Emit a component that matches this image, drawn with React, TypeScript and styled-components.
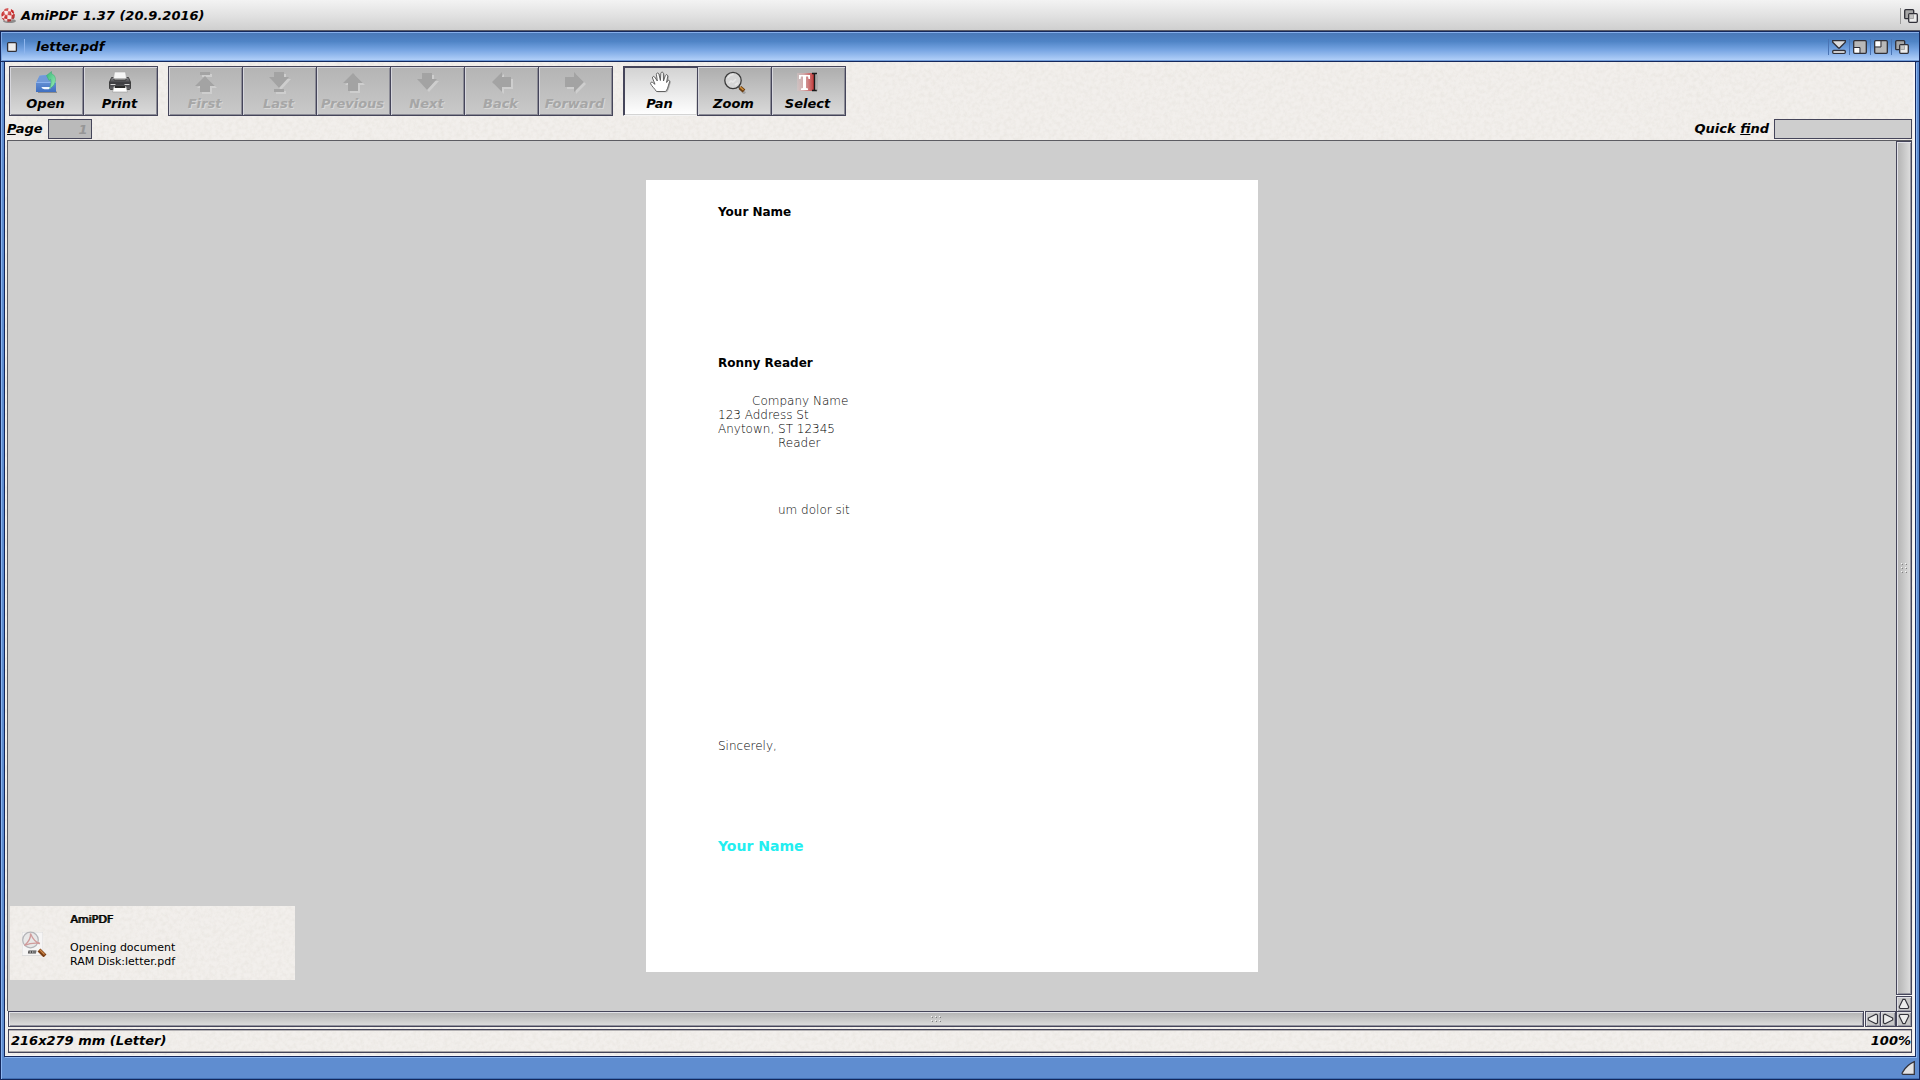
import React from "react";
import styled, { createGlobalStyle, css } from "styled-components";

const navy = "#14285c";
const edge = "#45455a";
const shine = "#8db6f0";
const marble = `#f2efec url("data:image/svg+xml,%3Csvg xmlns='http://www.w3.org/2000/svg' width='256' height='256'%3E%3Cfilter id='n'%3E%3CfeTurbulence type='fractalNoise' baseFrequency='0.25' numOctaves='3' stitchTiles='stitch'/%3E%3CfeColorMatrix values='0 0 0 0 0.6 0 0 0 0 0.57 0 0 0 0 0.5 0.35 0 0 0 -0.12'/%3E%3C/filter%3E%3Crect width='256' height='256' filter='url(%23n)'/%3E%3C/svg%3E")`;

const GlobalStyle = createGlobalStyle`
  * { box-sizing: border-box; }
  body { margin: 0; background: #cecece; }
  body, button, input {
    font-family: "DejaVu Sans", "Noto Sans", sans-serif;
    font-size: 13px;
    line-height: 16px;
    color: #000;
  }
  button { margin: 0; padding: 0; border: 0; background: none; }
  svg { display: block; flex: none; }
`;

const boldItalic = css`
  font-weight: bold;
  font-style: italic;
`;

const Screen = styled.div`
  display: flex;
  flex-direction: column;
  height: 100vh;
`;

const ScreenBar = styled.header`
  ${boldItalic}
  display: flex;
  align-items: center;
  gap: 4px;
  height: 31px;
  flex: none;
  padding: 1px 0 0 1px;
  background: linear-gradient(#f3f3f3, #e2e2e2 50%, #cfcfcf);
  border-bottom: 1px solid #5a5a66;
`;

const BarTitle = styled.h1`
  flex: 1;
  margin: 0;
  font-size: 13px;
`;

const Window = styled.main`
  display: flex;
  flex-direction: column;
  flex: 1;
  min-height: 0;
  border: 1px solid ${navy};
`;

const WindowBar = styled.div`
  ${boldItalic}
  display: flex;
  align-items: center;
  height: 30px;
  flex: none;
  padding: 0 7px 0 5px;
  background: linear-gradient(#4a78b8, #4f84c6 30%, #76a4e2 60%, #b6d3fb);
  border-top: 1px solid #86aeea;
  border-bottom: 1px solid ${navy};
  box-shadow: inset 1px 0 #7ea8e4, inset 0 -1px #6f9ad8;
`;

const Gadget = styled.button<{ $screen?: boolean }>`
  width: ${(p) => (p.$screen ? 20 : 21)}px;
  height: 16px;
  padding: 1px 3px;
  border-left: 1px solid ${(p) => (p.$screen ? "#9a9a9a" : "#4a74b4")};
`;

const CloseGadget = styled.button`
  width: 19px;
  height: 16px;
  padding: 2px 0;
  border-right: 1px solid #8fb6ee;
  margin-right: 11px;
`;

const Frame = styled.div`
  display: flex;
  flex-direction: column;
  flex: 1;
  min-height: 0;
  padding: 0 3px;
  background: #5f8dd0;
  box-shadow: inset 1px 0 ${shine}, inset 0 -1px #4270b4;
`;

const Client = styled.div`
  display: flex;
  flex-direction: column;
  flex: 1;
  min-height: 0;
  padding: 0 3px 3px 2px;
  background: ${marble};
  border: 1px solid ${navy};
  border-top: 0;
  box-shadow: 1px 1px ${shine}, inset -2px -1px #f6f5f6;
`;

const FrameFoot = styled.div`
  display: flex;
  justify-content: flex-end;
  align-items: center;
  height: 22px;
  flex: none;
`;

const Toolbar = styled.div`
  display: flex;
  gap: 10px;
  padding: 4px 2px 0;
`;

const ToolGroup = styled.div`
  display: flex;
`;

const ToolButton = styled.button<{ $pressed?: boolean }>`
  ${boldItalic}
  display: flex;
  flex-direction: column;
  align-items: center;
  gap: 2px;
  width: 75px;
  height: 50px;
  padding: 3px 2px 0 0;
  border: 1px solid ${edge};
  background: linear-gradient(#adadad, #dadada);
  box-shadow: inset 1px 1px #d6d6dc, inset -1px -1px #8c8c96;
  & + & { margin-left: -1px; }
  &:disabled {
    color: #a6a6a6;
    text-shadow: 1px 1px #d8d8d8;
    background: linear-gradient(#b4b4b4, #c9c9c9);
  }
  ${(p) =>
    p.$pressed &&
    css`
      background: linear-gradient(#d2d2d2, #ffffff);
      border-color: ${edge} #f4f4f4 #f4f4f4 ${edge};
      box-shadow: inset 1px 1px ${edge}, inset -1px -1px #d4d4d4;
    `}
`;

const FieldRow = styled.div`
  ${boldItalic}
  display: flex;
  align-items: center;
  margin: 3px 0 1px;
`;

const Spacer = styled.div`
  flex: 1;
`;

const Field = styled.input<{ $width: number }>`
  ${boldItalic}
  width: ${(p) => p.$width}px;
  height: 20px;
  margin: 0 0 0 5px;
  padding: 0 3px;
  border: 1px solid ${edge};
  border-radius: 0;
  background: #cecece;
  outline: none;
  &:disabled {
    background: #bababa;
    color: #969696;
    text-align: right;
  }
`;

const Workspace = styled.div`
  display: grid;
  grid-template: minmax(0, 1fr) 16px / minmax(0, 1fr) 16px;
  flex: 1;
  min-height: 0;
`;

const Viewport = styled.section`
  position: relative;
  display: flex;
  align-items: center;
  justify-content: center;
  overflow: hidden;
  background: #cecece;
  border: solid #5c5c62;
  border-width: 1px 0 0 1px;
`;

const VColumn = styled.div`
  grid-column: 2;
  grid-row: 1 / 3;
  display: flex;
  flex-direction: column;
  background: #f4f4f6;
  border-top: 1px solid #5c5c62;
`;

const HRow = styled.div`
  display: flex;
  padding-left: 1px;
  background: #f4f4f6;
`;

const ScrollBar = styled.div<{ $vertical?: boolean }>`
  display: flex;
  align-items: center;
  justify-content: center;
  flex: 1;
  border: 1px solid ${edge};
  background: linear-gradient(${(p) => (p.$vertical ? "to right" : "to bottom")}, #b2b2b2, #dedede);
  box-shadow: inset 1px 1px #e2e2e8, inset -1px -1px #9696a0;
  ${(p) => (p.$vertical ? "margin-bottom: 1px;" : "margin-right: 1px;")}
`;

const ArrowButton = styled.button<{ $join?: "left" | "top" }>`
  display: flex;
  align-items: center;
  justify-content: center;
  width: 16px;
  height: 16px;
  flex: none;
  border: 1px solid ${edge};
  background: #c8c8c8;
  box-shadow: inset 1px 1px #dedee4, inset -1px -1px #9a9aa4;
  ${(p) => p.$join && `margin-${p.$join}: -1px;`}
`;

const StatusBar = styled.footer`
  ${boldItalic}
  display: flex;
  justify-content: space-between;
  align-items: center;
  height: 24px;
  flex: none;
  margin: 2px 0 0 1px;
  padding: 0 0 0 2px;
  border: 1px solid ${edge};
  box-shadow: inset 0 1px #b4b2b4, inset 0 -1px #a8a6a8;
`;

const Sheet = styled.article`
  width: 612px;
  height: 792px;
  flex: none;
  padding: 25px 72px;
  background: #fff;
  font-size: 12px;
  line-height: 14px;
`;

const Line = styled.p<{ $strong?: boolean; $indent?: number; $before?: number }>`
  margin: ${(p) => p.$before ?? 0}px 0 0 ${(p) => p.$indent ?? 0}px;
  font-weight: ${(p) => (p.$strong ? "bold" : 200)};
  color: #000;
`;

const Signature = styled.p`
  margin: 85px 0 0;
  font-size: 14px;
  line-height: 16px;
  font-weight: bold;
  color: #22eef0;
`;

const Notice = styled.aside`
  position: absolute;
  left: 2px;
  bottom: 31px;
  display: flex;
  gap: 23px;
  width: 285px;
  height: 74px;
  padding: 7px 11px 5px;
  background: ${marble};
  font-size: 11px;
  line-height: 14px;
  svg { align-self: center; }
`;

const NoticeTitle = styled.div`
  margin-bottom: 14px;
  text-shadow: 1px 0 #000;
`;

type Dir = "first" | "last" | "up" | "down" | "left" | "right";
const arrows: Record<Dir, string> = {
  first: "M7 2h10v3H7zM12 6l10 10h-5v6H7v-6H2z",
  last: "M7 2h10v5h5L12 18 2 7h5zM7 19h10v3H7z",
  up: "M12 3l10 10h-5v8H7v-8H2z",
  down: "M7 3h10v6h5L12 20 2 9h5z",
  left: "M3 12L13 2v5h9v10h-9v5z",
  right: "M21 12L11 2v5H2v10h9v5z",
};

const NavArrow = ({ dir }: { dir: Dir }) => (
  <svg width="24" height="24" viewBox="0 0 24 24">
    <path d={arrows[dir]} fill="#cecece" transform="translate(2 2)" />
    <path d={arrows[dir]} fill="#a3a3a3" />
  </svg>
);

const OpenIcon = () => (
  <svg width="24" height="24" viewBox="0 0 24 24">
    <defs>
      <linearGradient id="box" x1="0" y1="0" x2="0" y2="1">
        <stop offset="0" stopColor="#7fa6e2" />
        <stop offset="1" stopColor="#3f6fc0" />
      </linearGradient>
      <linearGradient id="arr" x1="0" y1="0" x2="1" y2="1">
        <stop offset="0" stopColor="#35b878" />
        <stop offset="1" stopColor="#9cecb4" />
      </linearGradient>
    </defs>
    <path d="M4 21.500h19V23H4z" fill="#8c8c8c" />
    <path d="M5.500 5.500L15 4.500l7 8.500v9H2v-9z" fill="url(#box)" />
    <path d="M5.800 6l9.200-1 5.500 7H3z" fill="#7199d8" />
    <path d="M2 12.500h20" stroke="#8fb4ee" />
    <path d="M7.500 17h9.500c0 1.700-1.500 2.300-4.500 2.300s-5-.6-5-2.300z" fill="#f2f6ff" />
    <path d="M12.500 5.500L17.500 1.500v2.300c3.500 1 4.700 4.700 3.500 8.700-.8 3-3 5-5.500 6 1.200-3 2-6.500 1.200-9.200l-1.700 1.200z" fill="url(#arr)" stroke="#3aa870" strokeWidth=".5" />
  </svg>
);

const PrintIcon = () => (
  <svg width="24" height="24" viewBox="0 0 24 24">
    <defs>
      <linearGradient id="prn" x1="0" y1="0" x2="0" y2="1">
        <stop offset="0" stopColor="#8a8a8e" />
        <stop offset=".45" stopColor="#3a3a3e" />
        <stop offset="1" stopColor="#66666a" />
      </linearGradient>
    </defs>
    <path d="M3.500 7.500h2.500v2.500h12V7.500h2.500l2 4.500v6.500l-1 1h-19l-1-1V12z" fill="url(#prn)" stroke="#222" strokeWidth=".7" />
    <path d="M6.500 2h11l1 6.500h-13z" fill="#f6f6f6" stroke="#a8a8a8" strokeWidth=".6" />
    <path d="M2.500 14.500h5M16.500 14.500h5" stroke="#d4d4d4" />
    <path d="M6 16.500h12l1.500 5.500h-15z" fill="#fff" stroke="#999" strokeWidth=".6" />
    <path d="M7 16h10l.4 2H6.600z" fill="#2a2a2a" />
  </svg>
);

const hand =
  "M8.500 21.500C6.500 18.500 3.600 16 2.600 13.700c-.5-1.200 1-2.100 2.100-1.200L7 14.300 4.500 8c-.5-1.500 1.500-2.300 2.200-.9L9.300 11 8.400 4.400c-.1-1.700 2.100-1.900 2.500-.4l1.500 6.500.5-7.300c.2-1.500 2.300-1.500 2.400.1l.2 7.700 1.900-5.600c.6-1.400 2.500-.8 2.300.8l-1.100 6.300 1.100-1.800c.9-1 2.300-.2 1.900 1-.9 2.600-1.300 4.500-2 6.500-.5 1.500-1.300 2.500-2.100 3.300z";

const HandIcon = () => (
  <svg width="24" height="24" viewBox="0 0 24 24">
    <path d={hand} fill="#777" opacity=".5" transform="translate(1.200 .8)" />
    <path d={hand} fill="#fff" stroke="#555" strokeWidth=".9" />
  </svg>
);

const ZoomIcon = () => (
  <svg width="24" height="24" viewBox="0 0 24 24">
    <path d="M17 17.500l5 5" stroke="#8a8a8a" strokeWidth="3" opacity=".6" transform="translate(1 1)" />
    <circle cx="11" cy="10.500" r="8.200" fill="#d6d6d6" stroke="#3a3a3a" strokeWidth="1.300" />
    <path d="M6 8c1-2.500 3-3.500 5.500-3.500M7 13l2-2 2 1 3-3M13 15l3-2" fill="none" stroke="#e6e6e6" strokeWidth="1.600" />
    <path d="M16.500 16.500l2 2" stroke="#555" strokeWidth="2" />
    <path d="M18 17.500l4 3.500" stroke="#6b3d10" strokeWidth="4" />
    <path d="M18 17l3.500 3" stroke="#d0903c" strokeWidth="1.600" />
  </svg>
);

const SelectIcon = () => (
  <svg width="24" height="24" viewBox="0 0 24 24">
    <defs>
      <linearGradient id="sel">
        <stop offset="0" stopColor="#e0c4c4" stopOpacity=".4" />
        <stop offset=".4" stopColor="#d8a4a4" stopOpacity=".8" />
        <stop offset="1" stopColor="#c43838" />
      </linearGradient>
    </defs>
    <path d="M1 3h17v18H1z" fill="url(#sel)" />
    <path d="M3 5h11v4h-1.500L12 6.500h-2V18l2 .5v1.500H5V18.500L7 18V6.500H5L4.500 9H3z" fill="#fff" />
    <path d="M16 3.500h5M16 20.500h5M18.500 3v18" stroke="#1a1a1a" strokeWidth="1.500" />
    <path d="M21 5v16" stroke="#888" opacity=".6" />
  </svg>
);

const BoingBall = () => (
  <svg width="16" height="16" viewBox="0 0 16 16">
    <defs>
      <radialGradient id="ball" cx=".4" cy=".3" r=".75">
        <stop offset="0" stopColor="#fff" stopOpacity=".45" />
        <stop offset=".6" stopColor="#fff" stopOpacity="0" />
        <stop offset="1" stopColor="#300" stopOpacity=".55" />
      </radialGradient>
      <clipPath id="round"><circle cx="7" cy="7" r="6.800" /></clipPath>
    </defs>
    <ellipse cx="8.500" cy="13" rx="6.500" ry="2" fill="#8c8c8c" />
    <g clipPath="url(#round)">
      <path d="M0 0h16v16H0z" fill="#f6e8e8" />
      <path d="M3.500 0h4L7 3.200 3 2.800zM10 0l4.500 3-2 3L9.800 3.600zM0 5l3-2.200 1 3.700L.5 9zM7 3.200l2.800.4.900 3.900L6.500 7zM4 6.500l2.500.5-.2 4L3 10.500zM10.700 7.500l1.800-1.500L15 6v5l-4.700-.2zM6.300 11l4 .2-.5 4-3.500-.5zM0 9.500l3 1 1 4-3-1z" fill="#c42020" />
    </g>
    <circle cx="7" cy="7" r="6.800" fill="url(#ball)" />
  </svg>
);

const PdfIcon = () => (
  <svg width="26" height="26" viewBox="0 0 26 26">
    <path d="M1 1h21v24H1z" fill="#dcdcdc" />
    <path d="M1.500 1.500h20v22.500h-20z" fill="#f6f5f5" />
    <circle cx="9.500" cy="9" r="7.800" fill="#e8e8e8" stroke="#b4b4b8" strokeWidth="1.200" />
    <path d="M3.500 14.500C7.500 11 10 6.500 9.500 2.500c2 5 5 9 9.500 10-5-.7-10-.3-15.500 2z" fill="none" stroke="#d09c9c" strokeWidth="1.300" />
    <path d="M7.500 19.500h8l-.6 3h-8z" fill="#4a4a4a" />
    <path d="M8.500 21h1.500M11 21h1.500M13.500 21h1" stroke="#e8e8e8" />
    <path d="M18 19l6 6" stroke="#7c3f14" strokeWidth="4" />
    <path d="M18.500 18.500l5 5" stroke="#d08a4a" strokeWidth="1.300" />
  </svg>
);

const DepthIcon = () => (
  <svg width="14" height="14" viewBox="0 0 14 14">
    <rect x=".7" y=".7" width="9" height="9" rx="1" fill="#a6a6a6" stroke="#303038" strokeWidth="1.300" />
    <rect x="4.700" y="4.700" width="8.600" height="8.600" rx="1" fill="#ececec" stroke="#303038" strokeWidth="1.300" />
    <path d="M5.500 5.500h4v4h-4z" fill="#c4c4c4" stroke="#888" strokeWidth=".6" />
  </svg>
);

const IconifyIcon = () => (
  <svg width="14" height="14" viewBox="0 0 14 14">
    <path d="M.7.700h12.600v1.600L7.500 8h-1L.7 2.300z" fill="#dcdcdc" stroke="#303038" strokeWidth="1.300" />
    <rect x=".7" y="10.500" width="12.600" height="2.800" rx="1" fill="#fff" stroke="#303038" strokeWidth="1.300" />
  </svg>
);

const SizeIcon = ({ corner }: { corner: "top" | "bottom" }) => (
  <svg width="14" height="14" viewBox="0 0 14 14">
    <rect x=".7" y=".7" width="12.600" height="12.600" rx="1" fill="#b8b8b8" stroke="#303038" strokeWidth="1.300" />
    <path d={corner === "top" ? "M1.500 1.500h5v5h-5z" : "M1.500 8h5v4.500h-5z"} fill="#fff" />
    <path d={corner === "top" ? "M7 1v6H1" : "M1 7.500h6V13"} fill="none" stroke="#303038" />
  </svg>
);

const turn = { up: 0, right: 90, down: 180, left: 270 };
const Triangle = ({ to }: { to: keyof typeof turn }) => (
  <svg width="12" height="12" viewBox="0 0 12 12">
    <path d="M5 1.300h2l3.800 7.700-.8 1.500H2L1.200 9z" fill="#ececec" stroke="#34343c" strokeWidth="1.200" transform={`rotate(${turn[to]} 6 6)`} />
  </svg>
);

const Grip = ({ vertical }: { vertical?: boolean }) => {
  const cols = vertical ? [0, 4] : [0, 4, 8];
  const rows = vertical ? [0, 4, 8] : [0, 4];
  return (
    <svg width={vertical ? 6 : 10} height={vertical ? 10 : 6}>
      {cols.flatMap((x) =>
        rows.map((y) => (
          <g key={`${x}-${y}`}>
            <rect x={x} y={y} width="1" height="1" fill="#f4f4f4" />
            <rect x={x + 1} y={y + 1} width="1" height="1" fill="#808080" />
          </g>
        ))
      )}
    </svg>
  );
};

const navigation: [string, Dir][] = [
  ["First", "first"],
  ["Last", "last"],
  ["Previous", "up"],
  ["Next", "down"],
  ["Back", "left"],
  ["Forward", "right"],
];

export default function App() {
  return (
    <Screen>
      <GlobalStyle />
      <ScreenBar>
        <BoingBall />
        <BarTitle>AmiPDF 1.37 (20.9.2016)</BarTitle>
        <Gadget $screen aria-label="Cycle screens"><DepthIcon /></Gadget>
      </ScreenBar>
      <Window>
        <WindowBar>
          <CloseGadget aria-label="Close">
            <svg width="12" height="12" viewBox="0 0 12 12">
              <rect x="1.600" y="1.600" width="8.800" height="8.800" rx="1" fill="#ececec" stroke="#303038" strokeWidth="1.300" />
            </svg>
          </CloseGadget>
          <BarTitle as="h2">letter.pdf</BarTitle>
          <Gadget aria-label="Iconify"><IconifyIcon /></Gadget>
          <Gadget aria-label="Shrink"><SizeIcon corner="bottom" /></Gadget>
          <Gadget aria-label="Zoom window"><SizeIcon corner="top" /></Gadget>
          <Gadget aria-label="Depth"><DepthIcon /></Gadget>
        </WindowBar>
        <Frame>
          <Client>
            <Toolbar>
              <ToolGroup>
                <ToolButton><OpenIcon />Open</ToolButton>
                <ToolButton><PrintIcon />Print</ToolButton>
              </ToolGroup>
              <ToolGroup>
                {navigation.map(([label, dir]) => (
                  <ToolButton key={label} disabled><NavArrow dir={dir} />{label}</ToolButton>
                ))}
              </ToolGroup>
              <ToolGroup>
                <ToolButton $pressed aria-pressed="true"><HandIcon />Pan</ToolButton>
                <ToolButton><ZoomIcon />Zoom</ToolButton>
                <ToolButton><SelectIcon />Select</ToolButton>
              </ToolGroup>
            </Toolbar>
            <FieldRow>
              <label htmlFor="page"><u>P</u>age</label>
              <Field id="page" $width={44} defaultValue="1" disabled />
              <Spacer />
              <label htmlFor="find">Quick <u>f</u>ind</label>
              <Field id="find" $width={138} />
            </FieldRow>
            <Workspace>
              <Viewport>
                <Sheet>
                  <Line $strong>Your Name</Line>
                  <Line $strong $before={137}>Ronny Reader</Line>
                  <Line $before={24} $indent={34}>Company Name</Line>
                  <Line>123 Address St</Line>
                  <Line>Anytown, ST 12345</Line>
                  <Line $indent={60}>Reader</Line>
                  <Line $before={53} $indent={60}>um dolor sit</Line>
                  <Line $before={222}>Sincerely,</Line>
                  <Signature>Your Name</Signature>
                </Sheet>
                <Notice>
                  <PdfIcon />
                  <div>
                    <NoticeTitle>AmiPDF</NoticeTitle>
                    <div>Opening document</div>
                    <div>RAM Disk:letter.pdf</div>
                  </div>
                </Notice>
              </Viewport>
              <VColumn>
                <ScrollBar $vertical><Grip vertical /></ScrollBar>
                <ArrowButton aria-label="Scroll up"><Triangle to="up" /></ArrowButton>
                <ArrowButton $join="top" aria-label="Scroll down"><Triangle to="down" /></ArrowButton>
              </VColumn>
              <HRow>
                <ScrollBar><Grip /></ScrollBar>
                <ArrowButton aria-label="Scroll left"><Triangle to="left" /></ArrowButton>
                <ArrowButton $join="left" aria-label="Scroll right"><Triangle to="right" /></ArrowButton>
              </HRow>
            </Workspace>
            <StatusBar>
              <span>216x279 mm (Letter)</span>
              <span>100%</span>
            </StatusBar>
          </Client>
          <FrameFoot>
            <svg width="16" height="16" viewBox="0 0 16 16">
              <path d="M14.300 1.700v12.600H3c-1 0-1.200-1-.5-2C5 8 9 4 14.300 1.700z" fill="#e2e2e2" stroke="#34343c" strokeWidth="1.300" />
            </svg>
          </FrameFoot>
        </Frame>
      </Window>
    </Screen>
  );
}
